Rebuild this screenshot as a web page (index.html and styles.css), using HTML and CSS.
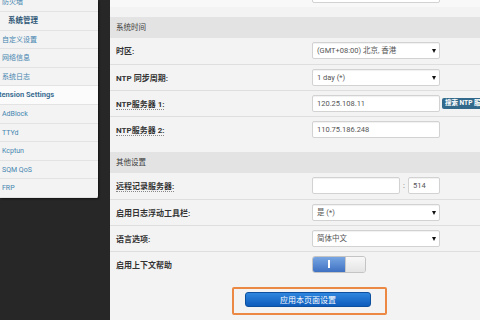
FILE: index.html
```html
<!DOCTYPE html>
<html lang="zh-CN">
<head>
  <meta charset="UTF-8" />
  <title>系统 - LuCI</title>
  <meta name="viewport" content="width=device-width, initial-scale=1.0" />
  <link rel="stylesheet" href="styles.css">
</head>
<body>
  <div class="page">
    <nav class="sidebar">
      <ul class="menu">
        <li class="item">防火墙</li>
        <li class="group">系统管理</li>
        <li class="item">自定义设置</li>
        <li class="item">网络信息</li>
        <li class="item">系统日志</li>
        <li class="group ext">Extension Settings</li>
        <li class="item">AdBlock</li>
        <li class="item">TTYd</li>
        <li class="item">Kcptun</li>
        <li class="item">SQM QoS</li>
        <li class="item">FRP</li>
      </ul>
    </nav>

    <main class="content">
      <div class="row row-cut">
        <span class="label"></span>
        <input class="field" type="text" value="">
      </div>

      <div class="section">
        <div class="section-title">系统时间</div>
        <div class="row">
          <span class="label">时区:</span>
          <span class="select"><select class="field"><option>(GMT+08:00) 北京, 香港</option></select></span>
        </div>
        <div class="row">
          <span class="label">NTP 同步周期:</span>
          <span class="select"><select class="field"><option>1 day (*)</option></select></span>
        </div>
        <div class="row">
          <span class="label"><span class="hint">NTP服务器 1:</span></span>
          <input class="field" type="text" value="120.25.108.11">
          <button class="btn-small">搜索 NTP 服务器</button>
        </div>
        <div class="row">
          <span class="label"><span class="hint">NTP服务器 2:</span></span>
          <input class="field" type="text" value="110.75.186.248">
        </div>
      </div>

      <div class="section">
        <div class="section-title">其他设置</div>
        <div class="row">
          <span class="label"><span class="hint">远程记录服务器:</span></span>
          <input class="field field-host" type="text" value="">
          <span class="colon">:</span>
          <input class="field field-port" type="text" value="514">
        </div>
        <div class="row">
          <span class="label">启用日志浮动工具栏:</span>
          <span class="select"><select class="field"><option>是 (*)</option></select></span>
        </div>
        <div class="row">
          <span class="label">语言选项:</span>
          <span class="select"><select class="field"><option>简体中文</option></select></span>
        </div>
        <div class="row">
          <span class="label">启用上下文帮助</span>
          <span class="toggle">
            <span class="toggle-on"><span class="toggle-bar"></span></span>
            <span class="toggle-off"></span>
          </span>
        </div>
      </div>

      <div class="actions">
        <div class="highlight">
          <button class="btn-apply">应用本页面设置</button>
        </div>
      </div>
    </main>
  </div>
</body>
</html>
```

FILE: styles.css
```css
* {
  box-sizing: border-box;
}
body {
  margin: 0;
  background: #272727;
  font-family: Roboto, "Noto Sans CJK SC", sans-serif;
  overflow: hidden;
}
.page {
  display: flex;
  height: 320px;
}

/* sidebar menu */
.sidebar {
  width: 98px;
  height: 198px;
  flex-shrink: 0;
  background: #f3f3f3;
  overflow: hidden;
  border-bottom-right-radius: 2px;
  box-shadow: 1px 1px 2px rgba(0, 0, 0, 0.5);
}
.menu {
  list-style: none;
  margin: -6.6px 0 0;
  padding: 0;
}
.menu li {
  height: 18.6px;
  line-height: 18px;
  font-size: 7px;
  color: #4585b0;
  border-bottom: 1px solid #e3e3e3;
  padding-left: 2px;
  white-space: nowrap;
}
.menu .group {
  font-weight: bold;
  font-size: 7.5px;
  color: #2e5676;
  padding-left: 8px;
}
.menu .ext {
  padding-left: 0;
  text-indent: -9px;
  background: #fbfbfb;
  color: #3b6e92;
}

/* main form */
.content {
  flex: 1;
  margin-left: 12px;
  background: #f3f3f3;
  overflow: hidden;
}
.row {
  display: flex;
  align-items: center;
  height: 26px;
  padding-left: 6px;
  border-top: 1px solid #dedede;
  white-space: nowrap;
}
.section-title + .row {
  border-top: none;
}
.row-cut {
  margin-top: -19px;
  background: #f8f8f8;
}
.section {
  margin-top: 9.5px;
  padding-bottom: 10px;
}
.section + .section {
  margin-top: 0;
}
.section-title {
  height: 21px;
  line-height: 21px;
  padding-left: 6px;
  background: #e3e3e3;
  font-size: 7.5px;
  color: #3a3a3a;
}
.label {
  width: 196px;
  flex-shrink: 0;
  font-size: 8px;
  font-weight: bold;
  color: #333;
}
.hint {
  border-bottom: 1px dotted #888;
}
.field {
  width: 128px;
  height: 17px;
  padding: 0 4px;
  background: #fff;
  border: 1px solid #d2d2d2;
  border-radius: 2px;
  box-shadow: inset 0 1px 1px rgba(0, 0, 0, 0.06);
  font-family: inherit;
  font-size: 7.5px;
  color: #555;
  flex-shrink: 0;
}
.select {
  position: relative;
  display: flex;
}
.select select {
  appearance: none;
  -webkit-appearance: none;
  outline: none;
}
.select::after {
  content: "";
  position: absolute;
  right: 4px;
  top: 7px;
  border-left: 2px solid transparent;
  border-right: 2px solid transparent;
  border-top: 4px solid #111;
}
.field-host {
  width: 88px;
}
.colon {
  width: 8px;
  text-align: center;
  font-size: 8px;
  color: #666;
}
.field-port {
  width: 32px;
}
.btn-small {
  margin-left: 2px;
  height: 11px;
  padding: 0 3px;
  border: none;
  border-radius: 2px;
  background: #336a8b;
  color: #fff;
  font-family: inherit;
  font-size: 6.5px;
  font-weight: bold;
  line-height: 11px;
  flex-shrink: 0;
}

/* toggle switch */
.toggle {
  display: flex;
  height: 17px;
  width: 54px;
  border-radius: 3px;
  overflow: hidden;
  border: 1px solid #c4c4c4;
}
.toggle-on {
  width: 32px;
  display: flex;
  align-items: center;
  justify-content: center;
  background: linear-gradient(#78a6e2, #3f71c2);
}
.toggle-bar {
  width: 1.5px;
  height: 8px;
  background: #fff;
}
.toggle-off {
  flex: 1;
  background: linear-gradient(#f8f8f8, #e4e4e4);
  border-left: 1px solid #c8c8c8;
}

/* apply button */
.actions {
  padding: 0 0 0 122px;
}
.highlight {
  display: inline-block;
  padding: 3px 14px 6px 11px;
  border: 2px solid #ea8844;
  border-radius: 2px;
}
.btn-apply {
  display: block;
  width: 126px;
  height: 15px;
  border: 1px solid #0b4f9e;
  border-radius: 3px;
  background: linear-gradient(#2f86de, #0d5cbc);
  color: #fff;
  font-family: inherit;
  font-size: 8px;
  padding: 0;
}
```
